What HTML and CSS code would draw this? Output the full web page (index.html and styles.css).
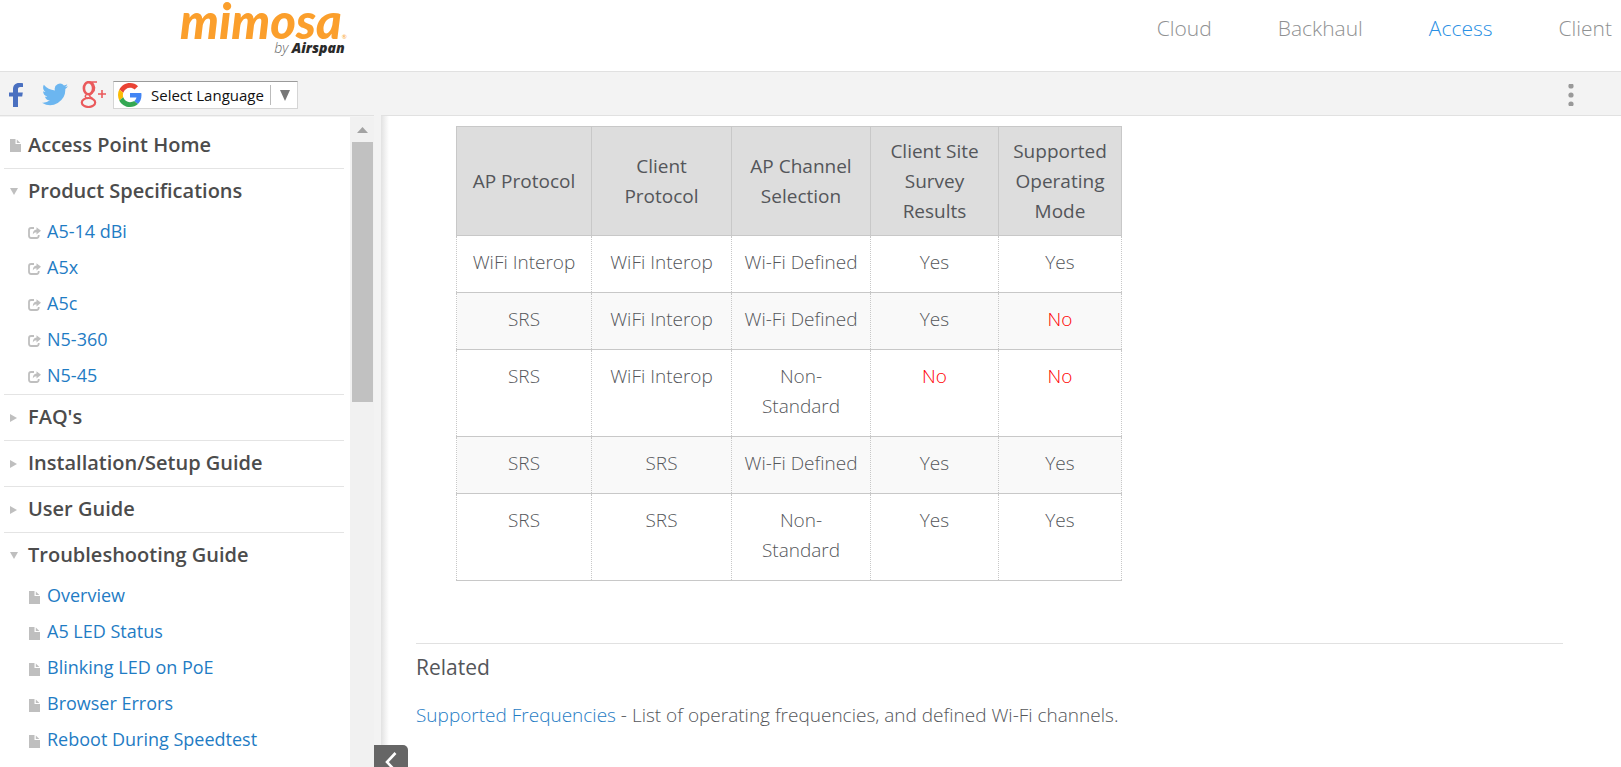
FILE: index.html
```html
<!DOCTYPE html>
<html lang="en">
<head>
<meta charset="utf-8">
<title>Access - Mimosa by Airspan</title>
<link rel="stylesheet" href="styles.css">
</head>
<body>
<svg class="defs" aria-hidden="true">
  <symbol id="doc" viewBox="0 0 11 13"><path d="M0 0h5.500v5H11v8H0z"/><path d="M6.800.6 10.400 3.900H6.800z"/></symbol>
  <symbol id="share" viewBox="0 0 13 12"><path d="M6 1H3.200C1.700 1 1 1.900 1 3.200v5.600C1 10.200 1.800 11 3.200 11h5.300c1.400 0 2.200-.8 2.200-2.200V8" fill="none" stroke="currentColor" stroke-width="1.800"/><path d="M8.500.2 13 3.800 8.500 7.400V5.200C6.800 5.200 5.800 5.900 4.800 7.400 4.800 4.500 6 2.500 8.500 2.400z"/></symbol>
  <symbol id="open" viewBox="0 0 8 7"><path d="M0 0h8L4 7z"/></symbol>
  <symbol id="closed" viewBox="0 0 7 8"><path d="M0 0v8l7-4z"/></symbol>
</svg>
<header class="header">
  <a class="logo" href="#" aria-label="mimosa by Airspan">
    <span class="logo-name">mimosa<small>®</small></span>
    <span class="logo-by">by <b>Airspan</b></span>
  </a>
  <nav class="topnav">
    <a href="#">Cloud</a>
    <a href="#">Backhaul</a>
    <a href="#" class="current">Access</a>
    <a href="#">Client</a>
  </nav>
</header>
<div class="toolbar">
  <a href="#" class="social" aria-label="Facebook"><svg width="14" height="24" viewBox="0 0 14 24"><path fill="#4a70c0" d="M4 24V13.500H0V9.500h4V6.500C4 2.300 6.300 0 10 0c1.600 0 3 .1 4 .3v3.600h-2.600C9.300 3.900 9 5 9 6.400v3.100h4.800l-.6 4H9V24z"/></svg></a>
  <a href="#" class="social" aria-label="Twitter"><svg width="26" height="23" viewBox="0 0 24 20"><path fill="#6cb6f0" d="M24 2.400c-.9.400-1.800.7-2.800.8 1-.6 1.800-1.600 2.200-2.700-1 .6-2 1-3.100 1.200A4.900 4.900 0 0 0 11.900 6.200C7.800 6 4.200 4 1.700 1 .4 3.200 1 6.100 3.200 7.600c-.8 0-1.600-.2-2.200-.6 0 2.300 1.600 4.400 3.900 4.900-.7.200-1.500.2-2.200.1.600 2 2.400 3.400 4.600 3.400A9.900 9.900 0 0 1 0 17.500 14 14 0 0 0 21.500 5c1-.7 1.800-1.600 2.500-2.600z"/></svg></a>
  <a href="#" class="social" aria-label="Google Plus"><svg width="26" height="27" viewBox="0 0 26 27"><g fill="none" stroke="#ea5a5c"><ellipse cx="8.500" cy="7.200" rx="4.600" ry="6" stroke-width="2.600"/><path d="M9 1h8M12 1.500c3 2.500 3.500 7.500.5 10-4 3-4 3.500 0 6M7 13c-2.500 2-2.500 3.500 1 4.500" stroke-width="1.600"/><ellipse cx="8.500" cy="21.500" rx="6.700" ry="4.500" stroke-width="2.200"/><path d="M18 13h8M22 9v8" stroke-width="1.600"/></g></svg></a>
  <label class="language">
    <svg width="24" height="24" viewBox="0 0 48 48" aria-hidden="true"><path fill="#ea4335" d="M24 9.500c3.540 0 6.710 1.220 9.210 3.600l6.850-6.850C35.900 2.380 30.470 0 24 0 14.620 0 6.510 5.380 2.560 13.220l7.980 6.190C12.430 13.720 17.740 9.500 24 9.500z"/><path fill="#4285f4" d="M46.980 24.550c0-1.570-.15-3.090-.38-4.550H24v9.020h12.940c-.58 2.960-2.260 5.480-4.780 7.180l7.730 6c4.510-4.180 7.090-10.360 7.090-17.650z"/><path fill="#fbbc05" d="M10.530 28.590c-.48-1.450-.76-2.990-.76-4.590s.27-3.140.76-4.590l-7.980-6.190C.92 16.460 0 20.120 0 24c0 3.880.92 7.540 2.560 10.780z"/><path fill="#34a853" d="M24 48c6.480 0 11.930-2.130 15.890-5.810l-7.730-6c-2.150 1.450-4.920 2.300-8.160 2.300-6.260 0-11.570-4.220-13.470-9.910l-7.980 6.190C6.510 42.620 14.620 48 24 48z"/></svg>
    <select aria-label="Select Language"><option>Select Language</option></select>
    <span class="language-arrow" aria-hidden="true"><svg width="10" height="11" viewBox="0 0 10 11"><path fill="#777" d="M0 0h10L5 11z"/></svg></span>
  </label>
  <button class="more" type="button" aria-label="More"><svg width="6" height="22" viewBox="0 0 6 22"><g fill="#999"><circle cx="3" cy="2" r="2.600"/><circle cx="3" cy="11" r="2.600"/><circle cx="3" cy="20" r="2.600"/></g></svg></button>
</div>
<div class="workspace">
  <aside class="sidebar">
    <ul class="tree">
      <li><a class="section" href="#"><span class="mark"><svg width="11" height="13"><use href="#doc"/></svg></span>Access Point Home</a></li>
      <li><a class="section" href="#"><span class="mark"><svg width="8" height="7"><use href="#open"/></svg></span>Product Specifications</a>
        <ul class="pages">
          <li><a href="#"><svg width="13" height="12"><use href="#share"/></svg>A5-14 dBi</a></li>
          <li><a href="#"><svg width="13" height="12"><use href="#share"/></svg>A5x</a></li>
          <li><a href="#"><svg width="13" height="12"><use href="#share"/></svg>A5c</a></li>
          <li><a href="#"><svg width="13" height="12"><use href="#share"/></svg>N5-360</a></li>
          <li><a href="#"><svg width="13" height="12"><use href="#share"/></svg>N5-45</a></li>
        </ul>
      </li>
      <li><a class="section" href="#"><span class="mark"><svg width="7" height="8"><use href="#closed"/></svg></span>FAQ's</a></li>
      <li><a class="section" href="#"><span class="mark"><svg width="7" height="8"><use href="#closed"/></svg></span>Installation/Setup Guide</a></li>
      <li><a class="section" href="#"><span class="mark"><svg width="7" height="8"><use href="#closed"/></svg></span>User Guide</a></li>
      <li><a class="section" href="#"><span class="mark"><svg width="8" height="7"><use href="#open"/></svg></span>Troubleshooting Guide</a>
        <ul class="pages">
          <li><a href="#"><svg width="13" height="13"><use href="#doc"/></svg>Overview</a></li>
          <li><a href="#"><svg width="13" height="13"><use href="#doc"/></svg>A5 LED Status</a></li>
          <li><a href="#"><svg width="13" height="13"><use href="#doc"/></svg>Blinking LED on PoE</a></li>
          <li><a href="#"><svg width="13" height="13"><use href="#doc"/></svg>Browser Errors</a></li>
          <li><a href="#"><svg width="13" height="13"><use href="#doc"/></svg>Reboot During Speedtest</a></li>
        </ul>
      </li>
    </ul>
    <div class="scrollbar" aria-hidden="true">
      <svg width="11" height="6" viewBox="0 0 11 6"><path fill="#a3a3a3" d="M5.500 0 11 6H0z"/></svg>
      <div class="thumb"></div>
    </div>
  </aside>
  <div class="splitter"><button class="collapse" type="button" aria-label="Collapse sidebar"><svg width="12" height="20" viewBox="0 0 12 20"><path d="M10.500 1 2 10l8.500 9" fill="none" stroke="#fff" stroke-width="2.600"/></svg></button></div>
  <main class="content">
    <table class="modes">
      <colgroup><col class="c1"><col class="c2"><col class="c3"><col class="c4"><col class="c5"></colgroup>
      <thead><tr><th>AP Protocol</th><th>Client Protocol</th><th>AP Channel Selection</th><th>Client Site Survey Results</th><th>Supported Operating Mode</th></tr></thead>
      <tbody>
        <tr><td>WiFi Interop</td><td>WiFi Interop</td><td>Wi-Fi Defined</td><td>Yes</td><td>Yes</td></tr>
        <tr><td>SRS</td><td>WiFi Interop</td><td>Wi-Fi Defined</td><td>Yes</td><td class="no">No</td></tr>
        <tr><td>SRS</td><td>WiFi Interop</td><td>Non-Standard</td><td class="no">No</td><td class="no">No</td></tr>
        <tr><td>SRS</td><td>SRS</td><td>Wi-Fi Defined</td><td>Yes</td><td>Yes</td></tr>
        <tr><td>SRS</td><td>SRS</td><td>Non-Standard</td><td>Yes</td><td>Yes</td></tr>
      </tbody>
    </table>
    <section class="related">
      <h2>Related</h2>
      <p><a href="#">Supported Frequencies</a> - List of operating frequencies, and defined Wi-Fi channels.</p>
    </section>
  </main>
</div>
</body>
</html>
```
FILE: styles.css
```css
* { box-sizing: border-box; }
body {
  margin: 0;
  height: 100vh;
  display: flex;
  flex-direction: column;
  overflow: hidden;
  background: #fff;
  color: #54565a;
  font-family: "Open Sans", "Noto Sans", sans-serif;
  font-size: 19px;
}
a { color: #1f7cc4; text-decoration: none; }
ul { list-style: none; margin: 0; padding: 0; }
svg { display: block; flex: none; }
button { border: 0; padding: 0; background: none; cursor: pointer; }
.defs { position: absolute; width: 0; height: 0; }

.header {
  flex: none;
  height: 72px;
  display: flex;
  justify-content: space-between;
  padding: 0 9px 0 180px;
  border-bottom: 1px solid #e1e1e1;
}
.logo { display: flex; flex-direction: column; align-items: flex-end; }
.logo-name {
  font: italic 900 49px/40px Lato, sans-serif;
  color: #fb9f2c;
}
.logo-name small { font-size: 6px; font-weight: 400; line-height: 6px; }
.logo-by { padding-right: 2px; font-size: 14px; line-height: 16px; font-style: italic; font-weight: 300; color: #666; }
.logo-by b { font-weight: 800; color: #2a2a2a; }
.topnav { display: flex; gap: 66px; font-size: 21px; font-weight: 300; line-height: 56px; }
.topnav a { color: #8f9192; }
.topnav .current { color: #2a90e4; }

.toolbar {
  flex: none;
  height: 44px;
  display: flex;
  align-items: center;
  padding: 2px 47px 0 9px;
  background: #f3f3f3;
  border-bottom: 1px solid #e1e1e1;
}
.social { margin-right: 19px; }
.social + .social { margin-right: 12px; }
.social + .social + .social { margin-right: 7px; }
.language {
  display: flex;
  align-items: center;
  height: 28px;
  padding: 0 7px 0 4px;
  background: #fff;
  border: 1px solid #d5d5d5;
  border-top-color: #9b9b9b;
}
.language select {
  appearance: none;
  border: 0;
  margin: 0 6px 0 9px;
  padding: 0;
  background: none;
  color: #111;
  font: 15px/22px "Open Sans", sans-serif;
}
.language-arrow { display: flex; align-items: center; height: 20px; padding: 2px 0 0 9px; border-left: 1px solid #bbb; }
.more { margin-left: auto; }

.workspace { flex: 1; min-height: 0; display: flex; }
.sidebar { flex: none; width: 374px; display: flex; overflow: hidden; border-top: 1px solid #f3f3f3; }
.tree { flex: 1; padding: 6px 6px 0 4px; }
.tree > li + li { border-top: 1px solid #e4e4e4; }
.section { display: flex; align-items: center; height: 45px; padding-bottom: 2px; color: #4c4c4c; font-size: 20px; font-weight: 600; }
.mark { width: 24px; padding: 2px 0 0 6px; color: #bfbfbf; }
.mark svg, .pages svg { fill: currentColor; }
.pages a { display: flex; align-items: center; gap: 6px; height: 36px; padding: 0 0 2px 24px; font-size: 18px; }
.pages svg { margin-top: 4px; color: #bfbfbf; }
.scrollbar { width: 24px; padding: 10px 1px 0 2px; background: #f1f1f1; }
.scrollbar svg { margin: 0 auto 9px 5px; }
.thumb { height: 260px; background: #c1c1c1; }

.splitter { flex: none; width: 7px; margin-top: -1px; background: #f3f3f3; position: relative; }
.collapse {
  position: absolute;
  left: 0;
  bottom: -12px;
  width: 34px;
  height: 34px;
  display: grid;
  place-items: center;
  background: #666;
  border-radius: 0 5px 5px 0;
  z-index: 1;
}

.content {
  flex: 1;
  min-width: 0;
  padding: 10px 58px 0 35px;
  background: linear-gradient(to right, #e2e2e2, #fff 8px);
}
.modes {
  margin-left: 40px;
  width: 666px;
  table-layout: fixed;
  border-collapse: collapse;
  line-height: 30px;
  text-align: center;
}
.c1 { width: 135px; }
.c2 { width: 140px; }
.c3 { width: 139px; }
.c4 { width: 128px; }
.c5 { width: 123px; }
.modes th { padding: 9px 10px; background: #ddd; border: 1px solid #c8c8c8; font-weight: 400; }
.modes td { padding: 11px 10px 15px; vertical-align: top; font-weight: 300; border: 1px dotted #c8c8c8; border-top: 1px solid #c8c8c8; border-bottom: 1px solid #c8c8c8; }
.modes tbody tr:nth-child(even) { background: #f9f9f9; }
.modes .no { color: #f00; }
.related { margin-top: 62px; border-top: 1px solid #e1e1e1; }
.related h2 { margin: 8px 0 18px; font-size: 21px; line-height: 30px; font-weight: 400; }
.related p { margin: 0; line-height: 30px; font-weight: 300; }
```
